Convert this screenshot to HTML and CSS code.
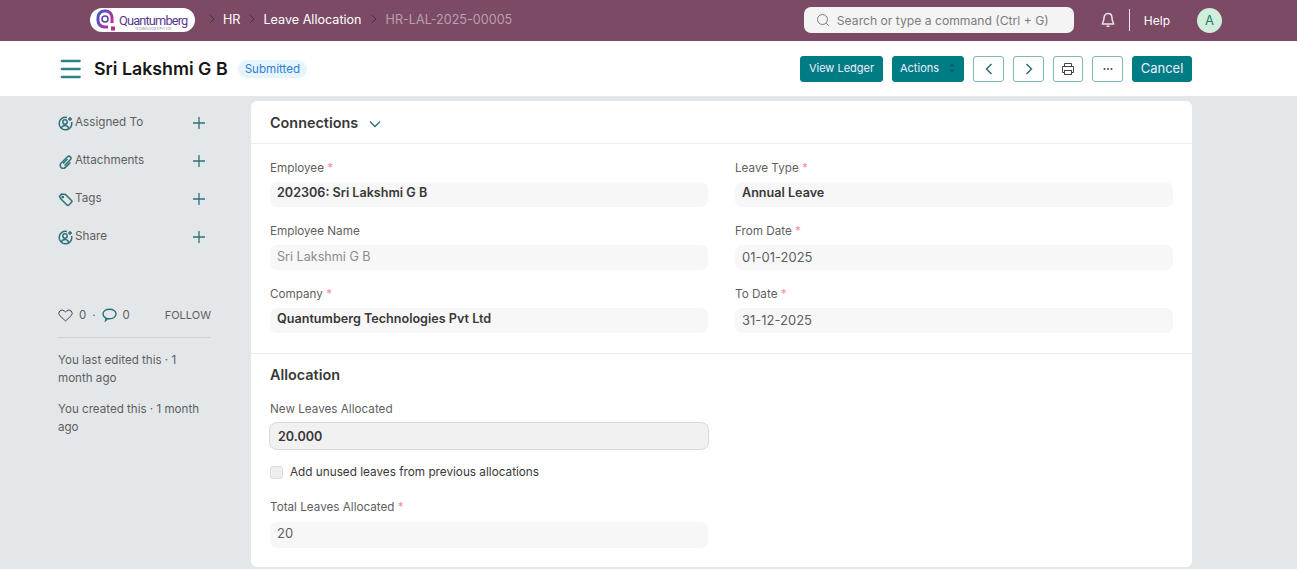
FILE: index.html
```html
<!DOCTYPE html>
<html lang="en">
  <head>
    <meta charset="UTF-8" />
    <title>HR-LAL-2025-00005</title>
    <link rel="stylesheet" href="styles.css">
  </head>
  <body>
    <header class="navbar">
      <div class="logo">
        <svg class="logo-mark" width="22" height="23" viewBox="0 0 22 23">
          <defs>
            <linearGradient id="logo-grad" x1="0" y1="0" x2="1" y2="0.6">
              <stop offset="0" stop-color="#3f57c4" />
              <stop offset="1" stop-color="#c02a9a" />
            </linearGradient>
          </defs>
          <path d="M12 18H8.500A6.500 6.500 0 0 1 2 11.500V8.500A6.500 6.500 0 0 1 8.500 2h1A6.500 6.500 0 0 1 16 8.500V14" fill="none" stroke="url(#logo-grad)" stroke-width="3" />
          <circle cx="9" cy="10" r="3" fill="none" stroke="#5a3aa8" stroke-width="1.500" />
          <rect x="15" y="17.500" width="4" height="4" fill="#b8268f" />
        </svg>
        <div class="logo-text">
          <span class="logo-name">Quantumberg</span>
          <span class="logo-sub">TECHNOLOGIES PVT LTD</span>
        </div>
      </div>
      <nav class="crumbs">
        <svg class="crumb-sep" width="8" height="10" viewBox="0 0 8 10"><path d="M2 1l4 4-4 4" /></svg>
        <a>HR</a>
        <svg class="crumb-sep" width="8" height="10" viewBox="0 0 8 10"><path d="M2 1l4 4-4 4" /></svg>
        <a>Leave Allocation</a>
        <svg class="crumb-sep" width="8" height="10" viewBox="0 0 8 10"><path d="M2 1l4 4-4 4" /></svg>
        <a class="crumb-current">HR-LAL-2025-00005</a>
      </nav>
      <div class="nav-right">
        <div class="search">
          <svg width="14" height="14" viewBox="0 0 14 14" fill="none" stroke="#7c7c7c" stroke-width="1"><circle cx="6.500" cy="6.500" r="5" /><path d="M10.200 10.200l2.600 2.600" /></svg>
          <span>Search or type a command (Ctrl + G)</span>
        </div>
        <svg class="bell" width="16" height="16" viewBox="0 0 16 16" fill="none" stroke="#f0e4ea" stroke-width="1.500"><path d="M8 1.600c-2.600 0-4 2-4 4.400 0 3-1.600 5-1.600 6h11.200c0-1-1.600-3-1.600-6 0-2.400-1.400-4.400-4-4.400z" /><path d="M6.500 14.200h3" /></svg>
        <span class="nav-divider"></span>
        <span class="help">Help</span>
        <svg class="help-caret" width="10" height="6" viewBox="0 0 10 6" fill="none" stroke="#4f6474" stroke-width="1"><path d="M1 1l4 4 4-4" /></svg>
        <span class="avatar">A</span>
      </div>
    </header>

    <section class="page-head">
      <div class="title-area">
        <svg class="menu-icon" width="22" height="20" viewBox="0 0 22 20" stroke="#2f7f86" stroke-width="2.600" stroke-linecap="round"><path d="M2 2h17.500M2 10h17.500M2 18h17.500" /></svg>
        <h1>Sri Lakshmi G B</h1>
        <span class="status">Submitted</span>
      </div>
      <div class="actions">
        <button class="btn btn-primary">View Ledger</button>
        <button class="btn btn-primary btn-actions">Actions
          <svg width="6" height="10" viewBox="0 0 6 10" fill="none" stroke="#063c40" stroke-width="1"><path d="M1 3.500l2-2 2 2M1 6.500l2 2 2-2" /></svg>
        </button>
        <button class="btn btn-icon">
          <svg width="8" height="12" viewBox="0 0 8 12" fill="none" stroke="#2d6468" stroke-width="1.400"><path d="M6.500 1L1.500 6l5 5" /></svg>
        </button>
        <button class="btn btn-icon">
          <svg width="8" height="12" viewBox="0 0 8 12" fill="none" stroke="#2d6468" stroke-width="1.400"><path d="M1.500 1l5 5-5 5" /></svg>
        </button>
        <button class="btn btn-icon btn-print">
          <svg width="14" height="14" viewBox="0 0 14 14" fill="none" stroke="#444" stroke-width="1"><path d="M3.500 4.500V1.500h7v3M3.500 10.500H1.500v-6h11v6h-2" /><rect x="3.500" y="8.500" width="7" height="4" /></svg>
        </button>
        <button class="btn btn-icon">
          <svg width="10" height="4" viewBox="0 0 10 4" fill="#444"><circle cx="1.500" cy="2" r="1" /><circle cx="5" cy="2" r="1" /><circle cx="8.500" cy="2" r="1" /></svg>
        </button>
        <button class="btn btn-primary btn-cancel">Cancel</button>
      </div>
    </section>

    <main class="layout">
      <aside class="sidebar">
        <div class="side-row">
          <svg class="side-icon" width="15" height="15" viewBox="0 0 15 15" fill="none" stroke="#2f7076" stroke-width="1.500"><path d="M9 1.400A6.300 6.300 0 1 0 13.600 6" /><circle cx="7" cy="6" r="2.200" /><path d="M3.200 12c.8-1.800 2.200-2.600 3.800-2.600s3 .8 3.800 2.400" /><path d="M12 1v4M10 3h4" /></svg>
          <span>Assigned To</span>
          <svg class="side-plus" width="12" height="12" viewBox="0 0 12 12" stroke="#2f7076" stroke-width="1.300"><path d="M6 0v12M0 6h12" /></svg>
        </div>
        <div class="side-row">
          <svg class="side-icon" width="15" height="15" viewBox="0 0 15 15" fill="none" stroke="#2f7076" stroke-width="1.500"><path d="M6.500 11.500l5.800-5.800a2 2 0 0 0-2.800-2.900L3 9.300a3 3 0 0 0 .2 4.300c1.200 1 3 1 4.200-.2l5-5" /><path d="M5 9.500l4.500-4.500" /></svg>
          <span>Attachments</span>
          <svg class="side-plus" width="12" height="12" viewBox="0 0 12 12" stroke="#2f7076" stroke-width="1.300"><path d="M6 0v12M0 6h12" /></svg>
        </div>
        <div class="side-row">
          <svg class="side-icon" width="15" height="15" viewBox="0 0 15 15" fill="none" stroke="#2f7076" stroke-width="1.500"><path d="M1.500 4.500l2-2.500 4 .5 6 6a1.300 1.300 0 0 1 0 1.800l-2.700 2.700a1.300 1.300 0 0 1-1.800 0l-6-6z" /><circle cx="4.800" cy="5" r=".6" /></svg>
          <span>Tags</span>
          <svg class="side-plus" width="12" height="12" viewBox="0 0 12 12" stroke="#2f7076" stroke-width="1.300"><path d="M6 0v12M0 6h12" /></svg>
        </div>
        <div class="side-row">
          <svg class="side-icon" width="15" height="15" viewBox="0 0 15 15" fill="none" stroke="#2f7076" stroke-width="1.500"><path d="M9 1.400A6.300 6.300 0 1 0 13.600 6" /><circle cx="7" cy="6" r="2.200" /><path d="M3.200 12c.8-1.800 2.200-2.600 3.800-2.600s3 .8 3.800 2.400" /><path d="M12 1v4M10 3h4" /></svg>
          <span>Share</span>
          <svg class="side-plus" width="12" height="12" viewBox="0 0 12 12" stroke="#2f7076" stroke-width="1.300"><path d="M6 0v12M0 6h12" /></svg>
        </div>

        <div class="side-stats">
          <svg width="15" height="13" viewBox="0 0 15 13" fill="none" stroke="#444" stroke-width="1"><path d="M7.500 12L1.800 6.600a3.300 3.300 0 0 1 0-4.600 3.300 3.300 0 0 1 4.600 0l1.100 1.100L8.600 2a3.300 3.300 0 0 1 4.600 0 3.300 3.300 0 0 1 0 4.600z" /></svg>
          <span>0</span>
          <span>·</span>
          <svg width="15" height="14" viewBox="0 0 15 14" fill="none" stroke="#2f7076" stroke-width="1.400"><path d="M3.500 12.800l.6-2.600A5 5 0 0 1 1 6c0-2.800 2.900-4.800 6.500-4.800S14 3.200 14 6s-2.900 4.800-6.500 4.800c-.7 0-1.300-.1-1.900-.2z" /></svg>
          <span>0</span>
          <span class="follow">FOLLOW</span>
        </div>
        <p class="side-meta">You last edited this · 1 month ago</p>
        <p class="side-meta">You created this · 1 month ago</p>
      </aside>

      <div class="form-card">
        <div class="connections">
          <span>Connections</span>
          <svg width="12" height="8" viewBox="0 0 12 8" fill="none" stroke="#2f6a70" stroke-width="1.300"><path d="M1 1.500l5 5 5-5" /></svg>
        </div>

        <section class="form-section">
          <div class="form-grid">
            <div class="field">
              <label>Employee <em>*</em></label>
              <div class="value value-bold">202306: Sri Lakshmi G B</div>
            </div>
            <div class="field">
              <label>Leave Type <em>*</em></label>
              <div class="value value-bold">Annual Leave</div>
            </div>
            <div class="field">
              <label>Employee Name</label>
              <div class="value value-muted">Sri Lakshmi G B</div>
            </div>
            <div class="field">
              <label>From Date <em>*</em></label>
              <div class="value">01-01-2025</div>
            </div>
            <div class="field">
              <label>Company <em>*</em></label>
              <div class="value value-bold">Quantumberg Technologies Pvt Ltd</div>
            </div>
            <div class="field">
              <label>To Date <em>*</em></label>
              <div class="value">31-12-2025</div>
            </div>
          </div>
        </section>

        <section class="form-section form-section-alloc">
          <h2>Allocation</h2>
          <div class="alloc-col">
            <div class="field field-new">
              <label>New Leaves Allocated</label>
              <div class="value value-input">20.000</div>
            </div>
            <div class="check-row">
              <span class="check"></span>
              <span>Add unused leaves from previous allocations</span>
            </div>
            <div class="field field-total">
              <label>Total Leaves Allocated <em>*</em></label>
              <div class="value">20</div>
            </div>
          </div>
        </section>
      </div>
    </main>
  </body>
</html>
```

FILE: styles.css
```css
* {
  box-sizing: border-box;
}
html,
body {
  height: 569px;
  overflow: hidden;
}
body {
  margin: 0;
  background-color: #e3e7ea;
  color: #383838;
  font-family: Inter, "Liberation Sans", sans-serif;
  font-size: 13px;
}
svg {
  display: block;
  flex: none;
}

/* top bar */
.navbar {
  display: flex;
  align-items: center;
  height: 41px;
  padding: 0 75px 1px 90px;
  background-color: #7c4a65;
}
.logo {
  display: flex;
  align-items: center;
  width: 105px;
  height: 24px;
  padding-left: 6px;
  border-radius: 12px;
  background-color: #fff;
}
.logo-text {
  display: flex;
  flex-direction: column;
  align-items: center;
  margin-left: 1px;
  padding-top: 4px;
}
.logo-name {
  color: #5a3a90;
  font-family: Roboto, sans-serif;
  font-size: 12.800px;
  line-height: 13px;
  letter-spacing: -0.85px;
}
.logo-sub {
  color: #8a7ba8;
  font-size: 3px;
  line-height: 4px;
}
.crumbs {
  display: flex;
  align-items: center;
  margin-left: 13px;
  padding-bottom: 2px;
  color: #fff;
}
.crumbs a {
  margin: 0 8px 0 7px;
  font-size: 12.600px;
}
.crumb-sep {
  fill: none;
  stroke: #4a3040;
  stroke-width: 1;
}
.crumbs .crumb-current {
  margin-left: 8px;
  color: #b9a0ae;
}
.nav-right {
  display: flex;
  align-items: center;
  margin-left: auto;
}
.search {
  display: flex;
  align-items: center;
  gap: 7px;
  width: 270px;
  height: 26px;
  padding-left: 12px;
  border-radius: 7px;
  background-color: #f4f4f4;
  color: #7c7c7c;
  font-size: 12.150px;
}
.bell {
  margin-left: 26px;
}
.nav-divider {
  width: 1px;
  height: 22px;
  margin-left: 13px;
  background-color: #f0e8ec;
}
.help {
  margin-left: 14px;
  color: #fff;
  font-size: 12px;
}
.help-caret {
  margin-left: 3px;
}
.avatar {
  display: flex;
  align-items: center;
  justify-content: center;
  width: 25px;
  height: 25px;
  margin-left: 14px;
  border-radius: 50%;
  background-color: #cfeedd;
  color: #24805c;
  font-size: 13px;
}

/* title row */
.page-head {
  display: flex;
  align-items: center;
  height: 55px;
  padding: 0 105px 0 60px;
  background-color: #fff;
}
.title-area {
  display: flex;
  align-items: center;
}
.page-head h1 {
  margin: 0 0 0 12px;
  color: #171717;
  font-size: 17.800px;
  font-weight: 600;
}
.status {
  margin-left: 10px;
  padding: 0 7px;
  border-radius: 9px;
  background-color: #e6f4fd;
  color: #2f80d0;
  font-size: 11.600px;
  line-height: 18px;
}
.actions {
  display: flex;
  align-items: center;
  margin-left: auto;
}
.btn {
  display: flex;
  align-items: center;
  justify-content: center;
  height: 26px;
  margin-left: 9px;
  padding: 0;
  border: 1px solid #7fb8bc;
  border-radius: 3px;
  background-color: #fff;
  font-family: inherit;
  font-size: 11px;
}
.btn:first-child {
  margin-left: 0;
}
.btn-primary {
  width: 83px;
  padding-bottom: 1px;
  border-color: #007c85;
  background-color: #007c85;
  color: #eef;
}
.btn-actions {
  justify-content: space-between;
  width: 72px;
  padding: 0 8px 1px 7px;
}
.btn-icon {
  width: 31px;
}
.btn-print {
  width: 30px;
}
.btn-cancel {
  width: 60px;
  font-size: 13px;
}

/* main area */
.layout {
  display: flex;
  align-items: flex-start;
  padding: 5px 105px 0 58px;
}
.sidebar {
  width: 153px;
  padding-top: 3px;
  color: #5f5f5f;
  font-size: 11.700px;
}
.side-row {
  display: flex;
  align-items: center;
  gap: 2px;
  height: 38px;
  padding-right: 6px;
}
.side-row span {
  margin-top: -3px;
}
.side-plus {
  margin-left: auto;
}
.side-stats {
  display: flex;
  align-items: center;
  gap: 6px;
  height: 37px;
  margin-top: 45px;
  padding-bottom: 8px;
  border-bottom: 1px solid #cfd3d7;
  font-size: 11.500px;
}
.follow {
  margin-left: auto;
  font-size: 11px;
}
.side-meta {
  margin: 13px 0 0;
  font-size: 11.600px;
  line-height: 18px;
}

.form-card {
  flex: 1;
  height: 466px;
  margin-left: 40px;
  border-radius: 6px;
  background-color: #fff;
}
.connections {
  display: flex;
  align-items: center;
  gap: 11px;
  height: 43px;
  padding-left: 19px;
  border-bottom: 1px solid #ededed;
  color: #383838;
  font-size: 14.400px;
  font-weight: 600;
}
.connections svg {
  margin-top: 3px;
}
.form-section {
  padding: 15px 19px 0;
}
.form-grid {
  display: grid;
  grid-template-columns: 438px 438px;
  column-gap: 27px;
  row-gap: 15px;
}
.field label {
  display: block;
  margin-bottom: 5px;
  color: #5f5f5f;
  font-size: 11.700px;
  line-height: 18px;
}
.field em {
  color: #f88ea0;
  font-style: normal;
}
.value {
  height: 25px;
  padding-left: 7px;
  border-radius: 7px;
  background-color: #f7f7f7;
  color: #5f5f5f;
  font-size: 13px;
  line-height: 24px;
}
.value-bold {
  color: #383838;
  font-size: 12.600px;
  font-weight: 600;
  line-height: 22px;
}
.value-muted {
  color: #8c8c8c;
  font-size: 12.600px;
}
.form-section-alloc {
  margin-top: 20px;
  padding-top: 11px;
  border-top: 1px solid #ededed;
}
.form-section-alloc h2 {
  margin: 0 0 15px;
  color: #383838;
  font-size: 14.400px;
  font-weight: 600;
  line-height: 20px;
}
.alloc-col {
  width: 438px;
}
.field-new label {
  margin-bottom: 4px;
}
.value-input {
  width: 440px;
  height: 28px;
  margin-left: -1px;
  padding-left: 8px;
  border: 1px solid #d9d9d9;
  border-radius: 8px;
  background-color: #f1f1f1;
  color: #383838;
  font-size: 12.600px;
  font-weight: 600;
  line-height: 27px;
}
.check-row {
  display: flex;
  align-items: center;
  gap: 7px;
  margin-top: 13px;
  color: #383838;
  font-size: 11.760px;
  line-height: 18px;
}
.check {
  width: 13px;
  height: 13px;
  border: 1px solid #dcdcdc;
  border-radius: 3px;
  background-color: #eee;
}
.field-total {
  margin-top: 17px;
}
.field-total label {
  margin-bottom: 6px;
}
.field-total .value {
  height: 26px;
  line-height: 23px;
}
```
